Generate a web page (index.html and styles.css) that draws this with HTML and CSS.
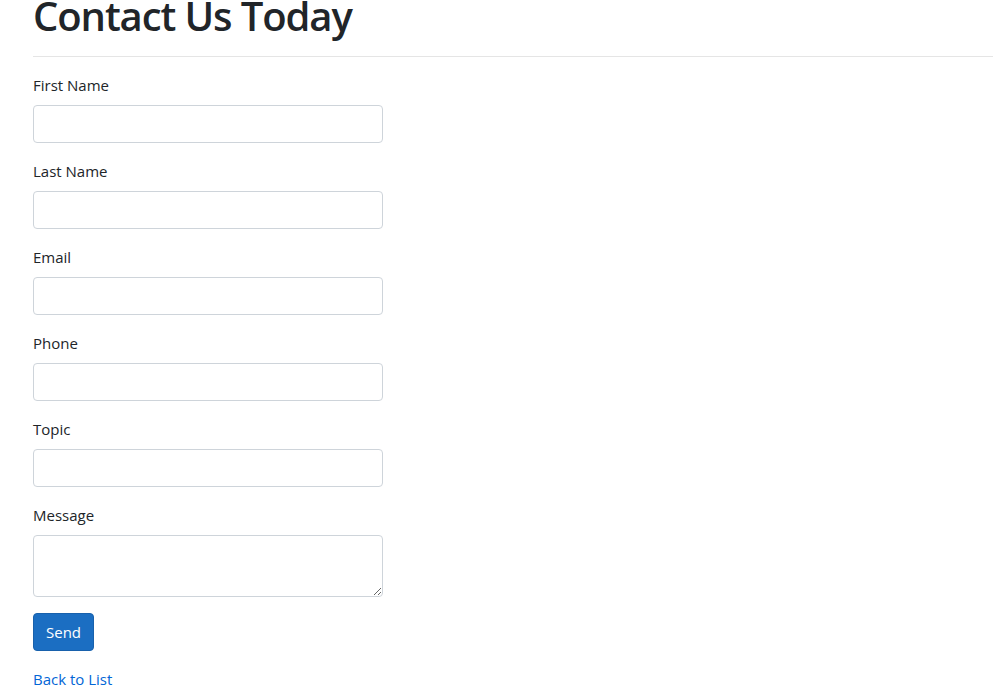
FILE: index.html
```html
<!DOCTYPE html>
<html lang="en">
<head>
<meta charset="utf-8">
<title>Contact Us Today</title>
<link rel="stylesheet" href="styles.css">
</head>
<body>
<main class="page">
  <h1 class="title">Contact Us Today</h1>
  <hr class="rule">
  <form class="form">
    <div class="group">
      <label class="label" for="fn">First Name</label>
      <input class="control" id="fn" type="text">
    </div>
    <div class="group">
      <label class="label" for="ln">Last Name</label>
      <input class="control" id="ln" type="text">
    </div>
    <div class="group">
      <label class="label" for="em">Email</label>
      <input class="control" id="em" type="text">
    </div>
    <div class="group">
      <label class="label" for="ph">Phone</label>
      <input class="control" id="ph" type="text">
    </div>
    <div class="group">
      <label class="label" for="tp">Topic</label>
      <input class="control" id="tp" type="text">
    </div>
    <div class="group">
      <label class="label" for="ms">Message</label>
      <textarea class="control area" id="ms" rows="2"></textarea>
    </div>
    <div class="group">
      <button class="btn" type="button">Send</button>
    </div>
  </form>
  <div class="back"><a class="link" href="#">Back to List</a></div>
</main>
</body>
</html>
```
FILE: styles.css
```css
html, body {
  margin: 0;
  padding: 0;
  background: #fff;
}
body {
  font-family: "Open Sans", "Noto Sans", sans-serif;
  font-size: 16px;
  line-height: 24px;
  color: #212529;
  overflow: hidden;
}
.page {
  padding-left: 33px;
  margin-top: -8px;
}
.title {
  font-size: 40px;
  font-weight: 600;
  line-height: 48px;
  margin: 0 0 8px 0;
  letter-spacing: -1.1px;
}
.rule {
  border: 0;
  border-top: 1px solid rgba(0,0,0,0.1);
  margin: 16px 0;
}
.form {
  margin: 0;
}
.group {
  margin-bottom: 16px;
}
.label {
  display: block;
  margin-bottom: 8px;
  font-size: 15px;
  line-height: 24px;
}
.control {
  display: block;
  box-sizing: border-box;
  width: 350px;
  height: 38px;
  padding: 6px 12px;
  font-family: inherit;
  font-size: 16px;
  line-height: 24px;
  color: #495057;
  background: #fff;
  border: 1px solid #ced4da;
  border-radius: 4px;
  margin: 0;
}
.area {
  height: 62px;
  resize: vertical;
  vertical-align: top;
}
.btn {
  display: block;
  box-sizing: border-box;
  height: 38px;
  padding: 6px 12px;
  font-family: inherit;
  font-size: 15px;
  line-height: 24px;
  color: #fff;
  background: #1b6ec2;
  border: 1px solid #1861ac;
  border-radius: 4px;
  width: 61px;
}
.back {
  font-size: 15px;
  line-height: 24px;
}
.link {
  color: #0366d6;
  text-decoration: none;
}
```
